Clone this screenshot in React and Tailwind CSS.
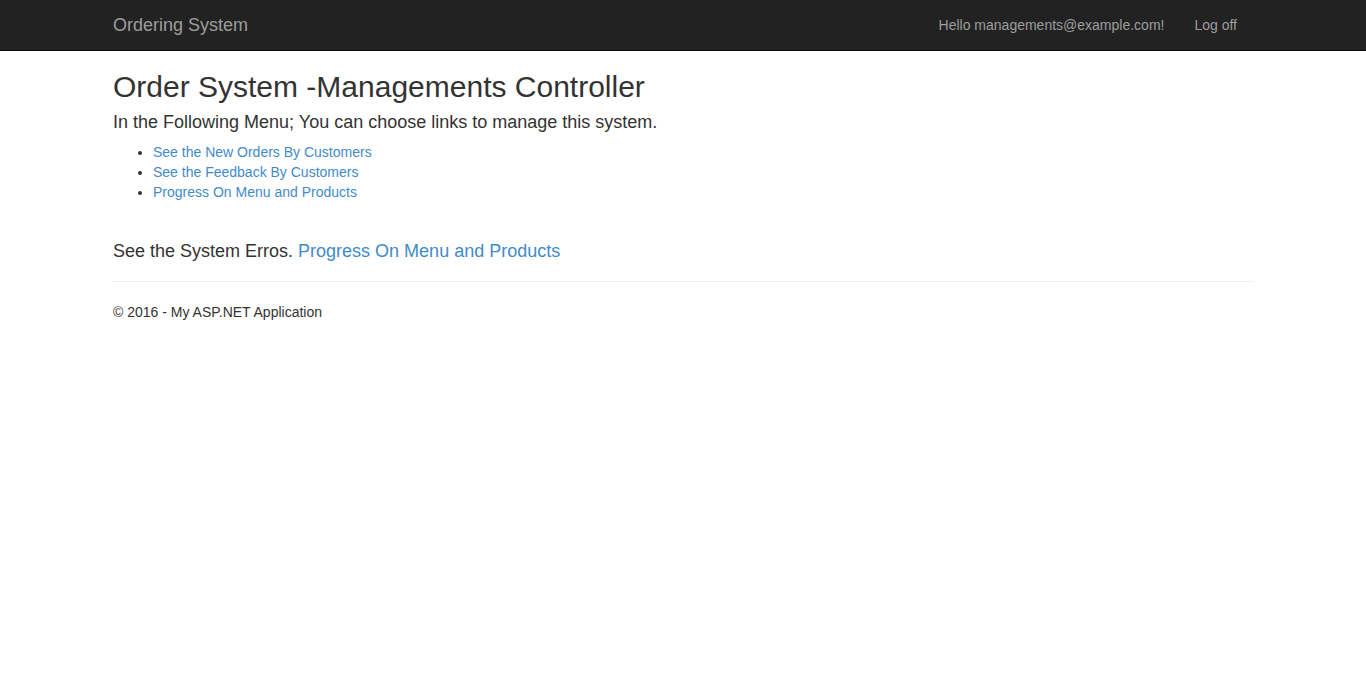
export default function App() {
  const font = { fontFamily: '"Liberation Sans", Arial, Helvetica, sans-serif' };
  return (
    <div className="min-h-[681px] bg-white text-[#333] text-[14px] leading-[20px]" style={font}>
      <nav className="h-[51px] bg-[#222] border-b border-[#080808]">
        <div className="w-[1170px] mx-auto px-[15px] flex items-center h-[50px]">
          <a className="text-[18px] leading-[20px] text-[#9d9d9d]">Ordering System</a>
          <div className="ml-auto flex items-center mr-[1px]">
            <a className="text-[#9d9d9d] px-[15px]">Hello managements@example.com!</a>
            <a className="text-[#9d9d9d] px-[15px]">Log off</a>
          </div>
        </div>
      </nav>
      <div className="w-[1170px] mx-auto px-[15px]">
        <h2 className="text-[30px] leading-[33px] mt-[19px] mb-[9px] font-medium">Order System -Managements Controller</h2>
        <h4 className="text-[18px] leading-[20px] mb-[10px] font-medium">In the Following Menu; You can choose links to manage this system.</h4>
        <ul className="list-disc pl-[40px] mb-[10px]">
          <li><a className="text-[#428bca]">See the New Orders By Customers</a></li>
          <li><a className="text-[#428bca]">See the Feedback By Customers</a></li>
          <li><a className="text-[#428bca]">Progress On Menu and Products</a></li>
        </ul>
        <h4 className="text-[18px] leading-[20px] mt-[39px] mb-[10px] font-medium">
          See the System Erros. <a className="text-[#428bca]">Progress On Menu and Products</a>
        </h4>
        <hr className="mt-[20px] mb-[20px] border-t border-[#eee]" />
        <footer>
          <p>© 2016 - My ASP.NET Application</p>
        </footer>
      </div>
    </div>
  );
}
